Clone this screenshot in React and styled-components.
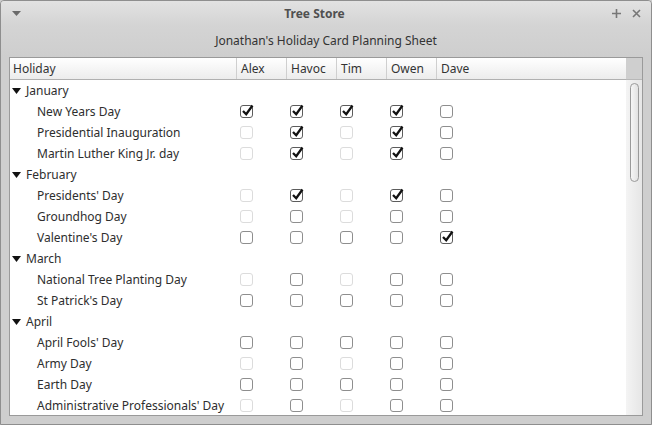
import React from 'react';
import styled, { createGlobalStyle } from 'styled-components';

const GlobalStyle = createGlobalStyle`
  html, body {
    margin: 0;
    padding: 0;
    background: #cecece;
  }
  * {
    box-sizing: border-box;
  }
`;

const Window = styled.div`
  display: flex;
  flex-direction: column;
  width: 652px;
  height: 425px;
  border: 1px solid #8e8e8e;
  border-radius: 4px 4px 0 0;
  background: #cecece;
  font-family: 'Noto Sans', 'Open Sans', sans-serif;
  font-size: 12px;
  color: #2e2e2e;
  overflow: hidden;
`;

const TitleBar = styled.div`
  display: flex;
  align-items: center;
  height: 24px;
  padding: 0 5px 0 8px;
  background: linear-gradient(#e2e2e2, #d4d4d4);
`;

const Title = styled.div`
  flex: 1;
  text-align: center;
  font-weight: bold;
  font-size: 12px;
  color: #505050;
`;

const TitleButton = styled.div`
  display: flex;
  align-items: center;
  justify-content: center;
  width: ${({ wide }) => (wide ? 20 : 14)}px;
  height: 14px;
  color: #7a7a7a;
`;

const Caption = styled.div`
  height: 32px;
  line-height: 32px;
  text-align: center;
  background: linear-gradient(#d4d4d4, #cecece);
  color: #333;
`;

const Frame = styled.div`
  display: flex;
  margin: 0 8px 0 8px;
  height: 359px;
  border: 1px solid #9a9a9a;
  background: #fff;
`;

const Main = styled.div`
  flex: 1;
  display: flex;
  flex-direction: column;
  min-width: 0;
`;

const ColumnGrid = styled.div`
  display: grid;
  grid-template-columns: 226px 50px 50px 50px 50px 1fr;
`;

const HeaderRow = styled(ColumnGrid)`
  height: 22px;
  border-bottom: 1px solid #b0b0b0;
  background: linear-gradient(#ffffff, #ececec);
`;

const HeaderCell = styled.div`
  padding-left: ${({ first }) => (first ? 3 : 4)}px;
  line-height: 21px;
  border-left: ${({ first }) => (first ? 'none' : '1px solid #cfcfcf')};
  color: #333;
`;

const Body = styled.div`
  flex: 1;
  overflow: hidden;
  background: #fff;
`;

const Row = styled(ColumnGrid)`
  height: 21px;
  align-items: center;
`;

const LabelCell = styled.div`
  display: flex;
  align-items: center;
  padding-left: ${({ child }) => (child ? 27 : 2)}px;
  line-height: 21px;
  white-space: nowrap;
`;

const Expander = styled.svg`
  width: 9px;
  height: 6px;
  margin-right: 5px;
  margin-top: 1px;
`;

const CheckCell = styled.div`
  padding-left: 4px;
  display: flex;
  align-items: center;
`;

const Box = styled.div`
  position: relative;
  width: 13px;
  height: 13px;
  border-radius: 3px;
  border: 1px solid
    ${({ checked, disabled }) => (disabled ? '#dcdcdc' : checked ? '#5c5c5c' : '#8e8e8e')};
  background: #fff;
`;

const CheckMark = styled.svg`
  position: absolute;
  left: 1px;
  top: -2px;
  width: 12px;
  height: 13px;
  overflow: visible;
`;

const Scroll = styled.div`
  width: 16px;
  display: flex;
  flex-direction: column;
`;

const ScrollCorner = styled.div`
  height: 22px;
  background: #cfcfcf;
  border-bottom: 1px solid #b8b8b8;
`;

const Trough = styled.div`
  flex: 1;
  padding: 3px 3px 0 4px;
  background: linear-gradient(90deg, #f4f4f4, #e6e6e6);
`;

const Thumb = styled.div`
  height: 99px;
  border: 1px solid #9a9a9a;
  border-radius: 5px;
  background: linear-gradient(90deg, #f6f6f6, #e2e2e2);
`;

const people = ['Alex', 'Havoc', 'Tim', 'Owen', 'Dave'];

// 0 = unchecked, 1 = checked, 2 = insensitive
const data = [
  {
    month: 'January',
    items: [
      ['New Years Day', [1, 1, 1, 1, 0]],
      ['Presidential Inauguration', [2, 1, 2, 1, 0]],
      ['Martin Luther King Jr. day', [2, 1, 2, 1, 0]],
    ],
  },
  {
    month: 'February',
    items: [
      ["Presidents' Day", [2, 1, 2, 1, 0]],
      ['Groundhog Day', [2, 0, 2, 0, 0]],
      ["Valentine's Day", [0, 0, 0, 0, 1]],
    ],
  },
  {
    month: 'March',
    items: [
      ['National Tree Planting Day', [2, 0, 2, 0, 0]],
      ["St Patrick's Day", [0, 0, 0, 0, 0]],
    ],
  },
  {
    month: 'April',
    items: [
      ["April Fools' Day", [0, 0, 0, 0, 0]],
      ['Army Day', [2, 0, 2, 0, 0]],
      ['Earth Day', [0, 0, 0, 0, 0]],
      ["Administrative Professionals' Day", [2, 0, 2, 0, 0]],
    ],
  },
];

const Check = ({ state }) => (
  <Box checked={state === 1} disabled={state === 2}>
    {state === 1 && (
      <CheckMark viewBox="0 0 12 13">
        <path d="M1 7 L4.2 10.2 L10.5 1.5" fill="none" stroke="#111" strokeWidth="2.3" />
      </CheckMark>
    )}
  </Box>
);

const MonthRow = ({ name }) => (
  <Row>
    <LabelCell>
      <Expander viewBox="0 0 9 6">
        <path d="M0 0 H9 L4.5 6 Z" fill="#111" />
      </Expander>
      {name}
    </LabelCell>
  </Row>
);

const HolidayRow = ({ name, states }) => (
  <Row>
    <LabelCell child>{name}</LabelCell>
    {states.map((s, i) => (
      <CheckCell key={i}>
        <Check state={s} />
      </CheckCell>
    ))}
  </Row>
);

const App = () => (
  <>
    <GlobalStyle />
    <Window>
      <TitleBar>
        <TitleButton>
          <svg width="9" height="5" viewBox="0 0 9 5">
            <path d="M0 0 H9 L4.5 5 Z" fill="#6a6a6a" />
          </svg>
        </TitleButton>
        <Title>Tree Store</Title>
        <TitleButton wide>
          <svg width="9" height="9" viewBox="0 0 9 9">
            <path d="M4.5 0 V9 M0 4.5 H9" stroke="#777" strokeWidth="1.6" />
          </svg>
        </TitleButton>
        <TitleButton wide>
          <svg width="9" height="9" viewBox="0 0 9 9">
            <path d="M1 1 L8 8 M8 1 L1 8" stroke="#777" strokeWidth="1.6" />
          </svg>
        </TitleButton>
      </TitleBar>
      <Caption>Jonathan's Holiday Card Planning Sheet</Caption>
      <Frame>
        <Main>
          <HeaderRow>
            <HeaderCell first>Holiday</HeaderCell>
            {people.map((p) => (
              <HeaderCell key={p}>{p}</HeaderCell>
            ))}
          </HeaderRow>
          <Body>
            {data.map((m) => (
              <React.Fragment key={m.month}>
                <MonthRow name={m.month} />
                {m.items.map(([name, states]) => (
                  <HolidayRow key={name} name={name} states={states} />
                ))}
              </React.Fragment>
            ))}
          </Body>
        </Main>
        <Scroll>
          <ScrollCorner />
          <Trough>
            <Thumb />
          </Trough>
        </Scroll>
      </Frame>
    </Window>
  </>
);

export default App;
